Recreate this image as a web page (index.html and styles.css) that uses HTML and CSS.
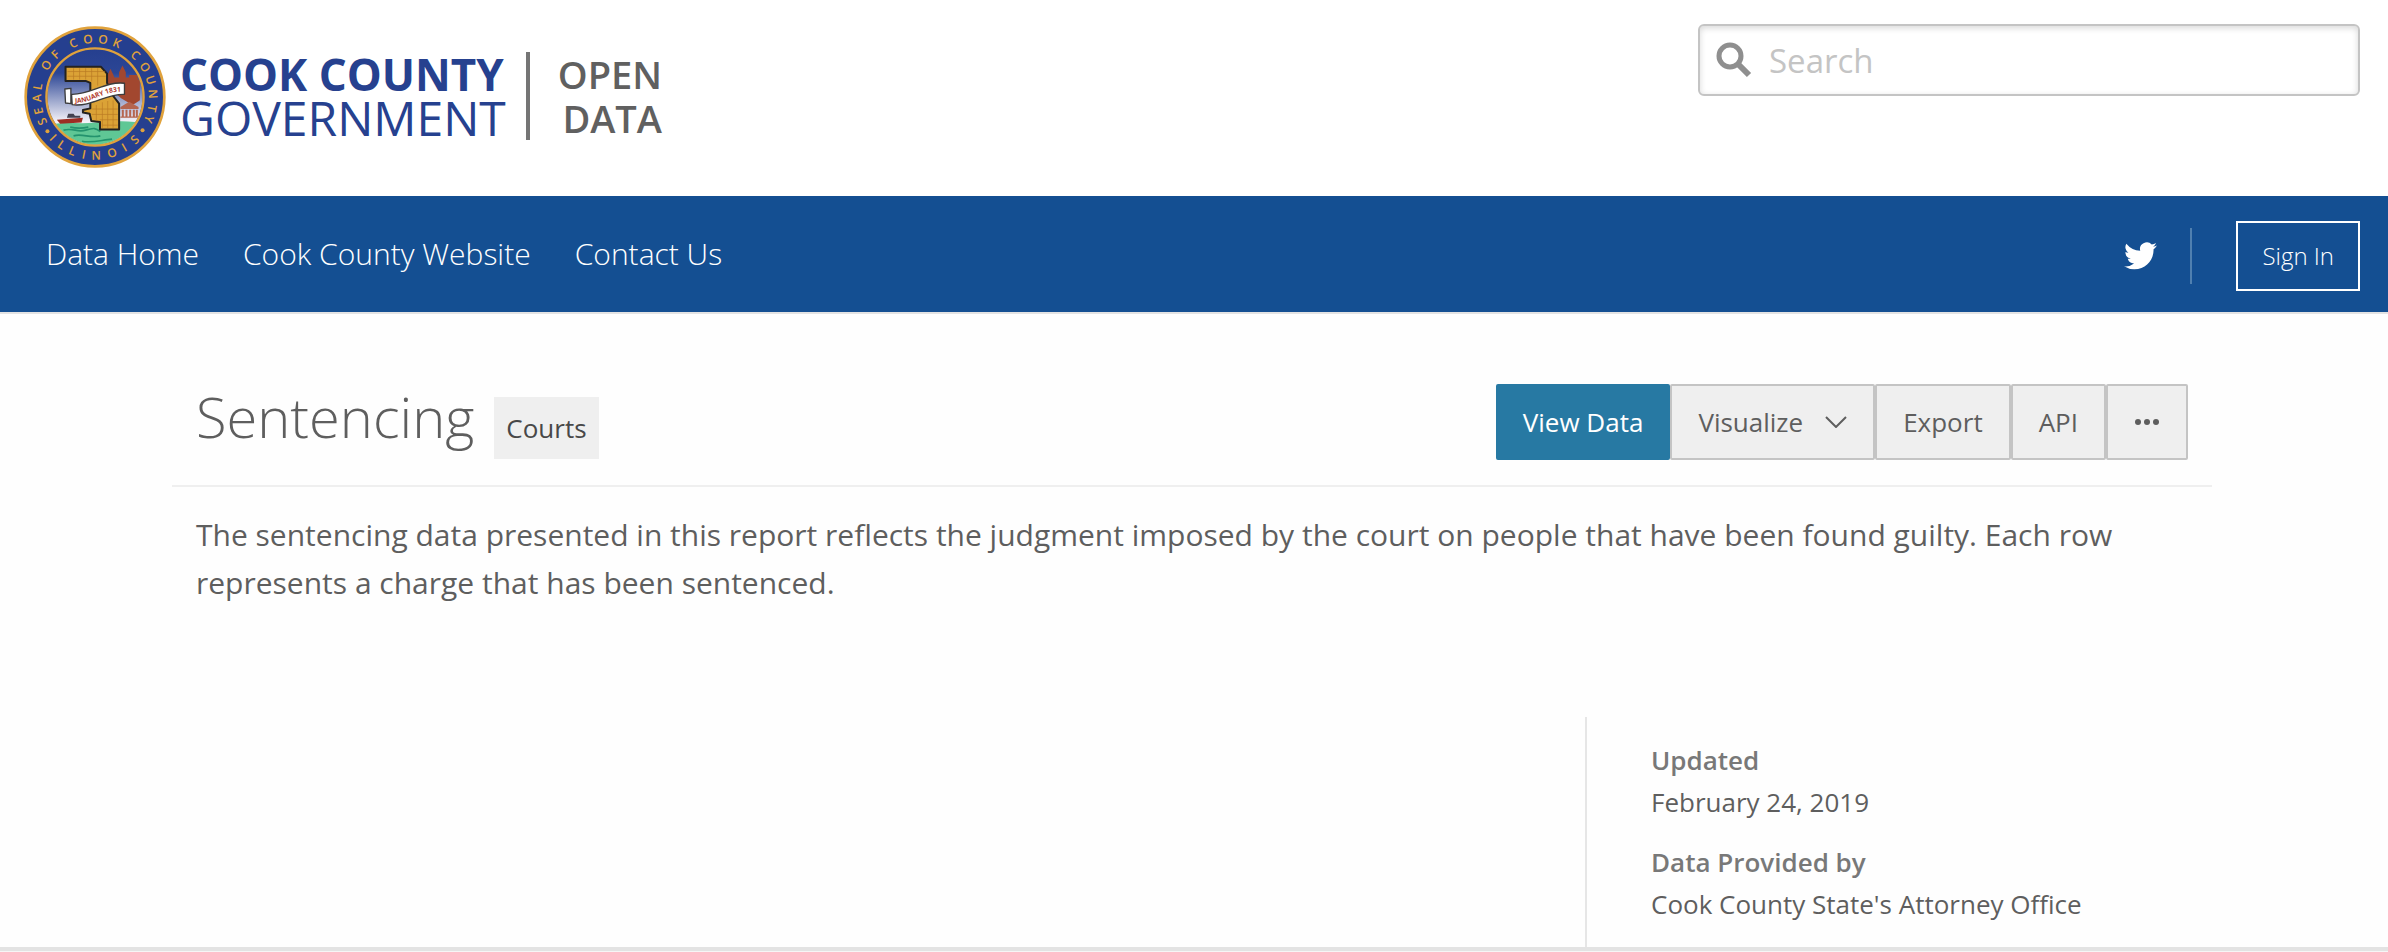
FILE: index.html
```html
<!DOCTYPE html>
<html lang="en">
<head>
<meta charset="utf-8">
<title>Sentencing | Cook County Open Data</title>
<link rel="stylesheet" href="styles.css">
</head>
<body>
<header class="site-header">
  <a class="brand" href="#">
    <svg class="seal" viewBox="42 34 424 424" role="img" aria-label="Seal of Cook County, Illinois">
      <defs>
        <linearGradient id="sky" x1="0" y1="0" x2="0" y2="1">
          <stop offset="0" stop-color="#253f8f"/>
          <stop offset=".25" stop-color="#2c4695"/>
          <stop offset=".75" stop-color="#f4f2f8"/>
          <stop offset="1" stop-color="#ffffff"/>
        </linearGradient>
        <clipPath id="disc"><circle cx="254" cy="246" r="142"/></clipPath>
        <path id="ring-top" d="M254 407A161 161 0 0 1 254 85A161 161 0 0 1 254 407"/>
        <path id="ring-bottom" d="M67 246A187 187 0 0 0 441 246"/>
        <path id="ribbon" d="M194 264C245 264 280 228 332 230"/>
      </defs>
      <circle cx="254" cy="246" r="207" fill="#253f8f" stroke="#e0a23c" stroke-width="8"/>
      <g clip-path="url(#disc)">
        <path fill="url(#sky)" d="M110 102h290v290H110z"/>
        <path fill="#5fc795" d="M110 330C160 318 210 328 254 322S340 318 400 322V400H110z"/>
        <path fill="none" stroke="#23936d" stroke-width="5" d="M160 345c30-8 40 8 66 0s30-6 44 4M190 362c26-8 50 8 80 0M215 378c30 6 60-4 90-6M180 336c20 4 34 4 54 0"/>
        <path fill="#a2472f" d="M292 215V180l8-18 8 16 4 10h14v-16l10-20 10 20v16h10v-8h26v14h6v62c-8 4-16 14-26 12l-30-18z"/>
        <path fill="#b5654f" d="M330 276l26-16 28 16v6h-54zM334 284h6v20h-6zM345 284h6v20h-6zM356 284h6v20h-6zM367 284h6v20h-6zM376 284h6v20h-6zM330 304h52v4h-52z"/>
        <path fill="#9c2d23" d="M140 314l78-6-4 14-64 4z"/>
        <path fill="#43414f" d="M170 308l4-12h16l4 6h16v6z"/>
      </g>
      <path fill="#dba236" stroke="#242220" stroke-width="6" stroke-linejoin="round" d="M166 156H272L290 176V204L306 240L326 266V343H269V321L243 318L238 296L218 292V285L240 280V204L226 198H166Z"/>
      <path fill="none" stroke="#b87a24" stroke-width="2" d="M172 170H284M172 184H286M190 160V194M208 160V194M226 160V194M244 160V200M262 160V212M244 282H322M244 298H322M268 314H322M276 330H322M258 270V316M276 262V338M292 258V338M308 256V338"/>
      <path fill="#fff" stroke="#3c3c3c" stroke-width="4" stroke-linejoin="round" d="M184 238C240 240 285 198 342 205V238C285 236 245 276 186 269ZM164 222L182 220V266L166 264Z"/>
      <text class="ribbon-text"><textPath href="#ribbon">JANUARY 1831</textPath></text>
      <circle cx="254" cy="246" r="145" fill="none" stroke="#e0a23c" stroke-width="7"/>
      <text class="ring-text"><textPath href="#ring-top"><tspan x="183 214 250 282">SEAL</tspan><tspan x="346 385">OF</tspan><tspan x="444 486 528 568">COOK</tspan><tspan x="629 672 711 750 790 821">COUNTY</tspan></textPath></text>
      <text class="ring-text"><textPath href="#ring-bottom"><tspan x="144 180 219 258 297 349 392 434">ILLINOIS</tspan></textPath></text>
      <circle cx="112" cy="348" r="6" fill="#e0a23c"/>
      <circle cx="396" cy="345" r="6" fill="#e0a23c"/>
    </svg>
    <span class="brand-name"><strong>COOK COUNTY</strong><span>GOVERNMENT</span></span>
    <span class="brand-site"><span>OPEN</span><span>DATA</span></span>
  </a>
  <form class="search" role="search">
    <label class="search-label" for="q">
      <svg class="search-icon" viewBox="0 0 36 36" role="img" aria-label="Search"><circle cx="14" cy="14" r="11" fill="none" stroke="#8f8f8f" stroke-width="5"/><path d="M22 22L33 33" stroke="#8f8f8f" stroke-width="6"/></svg>
    </label>
    <input class="search-input" id="q" type="search" placeholder="Search">
  </form>
</header>
<nav class="site-nav">
  <div class="nav-links">
    <a href="#">Data Home</a>
    <a href="#">Cook County Website</a>
    <a href="#">Contact Us</a>
  </div>
  <div class="nav-account">
    <a class="twitter" href="#" aria-label="Twitter"><svg viewBox="0 0 24 20" width="33" height="28"><path fill="#fff" d="M24 2.400a9.800 9.800 0 0 1-2.800.800A4.900 4.900 0 0 0 23.300.500a9.900 9.900 0 0 1-3.100 1.200A4.900 4.900 0 0 0 11.800 6.200 14 14 0 0 1 1.700 1a4.900 4.900 0 0 0 1.500 6.600A4.900 4.900 0 0 1 1 7v.100a4.900 4.900 0 0 0 3.900 4.800 4.900 4.900 0 0 1-2.200.1 4.900 4.900 0 0 0 4.600 3.400A9.900 9.900 0 0 1 0 17.500a14 14 0 0 0 7.500 2.200c9.100 0 14-7.500 14-14v-.600A10 10 0 0 0 24 2.400z"/></svg></a>
    <a class="sign-in" href="#">Sign In</a>
  </div>
</nav>
<main class="dataset">
  <div class="dataset-head">
    <div class="dataset-title">
      <h1>Sentencing</h1>
      <a class="category" href="#">Courts</a>
    </div>
    <div class="actions">
      <button class="action primary" type="button">View Data</button>
      <button class="action" type="button">Visualize <svg class="chevron" viewBox="0 0 22 12" width="22" height="12"><path d="M1 1L11 11L21 1" fill="none" stroke="#5e5e5e" stroke-width="2"/></svg></button>
      <button class="action" type="button">Export</button>
      <button class="action" type="button">API</button>
      <button class="action more" type="button" aria-label="More"><svg class="dots" viewBox="0 0 24 6" width="24" height="6"><g fill="#5e5e5e"><circle cx="3" cy="3" r="3"/><circle cx="12" cy="3" r="3"/><circle cx="21" cy="3" r="3"/></g></svg></button>
    </div>
  </div>
  <p class="description">The sentencing data presented in this report reflects the judgment imposed by the court on people that have been found guilty. Each row represents a charge that has been sentenced.</p>
  <dl class="metadata">
    <dt>Updated</dt>
    <dd>February 24, 2019</dd>
    <dt>Data Provided by</dt>
    <dd>Cook County State's Attorney Office</dd>
  </dl>
</main>
<hr class="section-rule">
</body>
</html>
```
FILE: styles.css
```css
* { box-sizing: border-box; }

body {
  margin: 0;
  background: #fefefe;
  color: #5e5e5e;
  font-family: "Open Sans", "Noto Sans", sans-serif;
  font-size: 26px;
}

a { color: inherit; text-decoration: none; }

.site-header {
  display: flex;
  justify-content: space-between;
  align-items: flex-start;
  height: 196px;
  padding: 24px 28px 0 24px;
  background: #fff;
}

.brand { display: flex; align-items: center; }
.seal { width: 142px; height: 142px; margin-top: 2px; }
.ring-text { fill: #e0a23c; font-size: 36px; font-weight: 600; text-anchor: middle; }
.ribbon-text { fill: #b03a2c; font-size: 20px; font-weight: 700; }

.brand-name, .brand-site { display: flex; flex-direction: column; line-height: 44px; }
.brand-name { margin-left: 14px; color: #26418f; font-size: 48px; }
.brand-name strong { font-size: 44px; font-weight: 700; }
.brand-site {
  align-items: flex-end;
  margin-left: 20px;
  padding: 0 0 0 28px;
  border-left: 4px solid #757575;
  color: #606060;
  font-size: 38px;
  font-weight: 600;
}

.search {
  display: flex;
  align-items: center;
  width: 662px;
  height: 72px;
  padding: 0 16px;
  border: 2px solid #c4c4c4;
  border-radius: 6px;
  background: #fff;
  box-shadow: inset 0 2px 6px #d8d8d8;
}
.search-icon { display: block; width: 36px; height: 36px; }
.search-input {
  flex: 1;
  min-width: 0;
  margin-left: 17px;
  padding: 0;
  border: 0;
  outline: 0;
  background: none;
  color: #5e5e5e;
  font: 33px "Open Sans", sans-serif;
}
.search-input::placeholder { color: #c4c4c4; }

.site-nav {
  display: flex;
  justify-content: space-between;
  align-items: center;
  height: 118px;
  padding: 0 28px 0 46px;
  border-bottom: 2px solid #e3e3e3;
  background: #144f92;
  color: #fff;
  font-weight: 300;
}
.nav-links { display: flex; gap: 44px; padding-bottom: 2px; font-size: 30px; }
.nav-account { display: flex; align-items: center; padding-top: 4px; }
.twitter { padding: 14px 33px 14px 0; border-right: 2px solid #5080b0; line-height: 0; }
.sign-in {
  margin-left: 44px;
  padding: 0 24px;
  border: 2px solid #fff;
  font-size: 24px;
  line-height: 66px;
}

.dataset { padding: 70px 176px 0 172px; }
.dataset-head {
  display: flex;
  justify-content: space-between;
  align-items: flex-start;
  height: 103px;
  padding: 0 24px;
  border-bottom: 2px solid #efefef;
}
.dataset-title { display: flex; align-items: baseline; gap: 20px; }
h1 { margin: 0; font-size: 56px; font-weight: 300; line-height: 64px; }
.category { padding: 0 12px; background: #efefef; color: #484848; line-height: 62px; }

.actions { display: flex; }
.action {
  display: flex;
  align-items: center;
  height: 76px;
  padding: 0 26px;
  border: 2px solid #c4c4c4;
  border-radius: 2px;
  background: #efefef;
  color: #5e5e5e;
  font: 26px "Open Sans", sans-serif;
}
.action.primary { padding: 0 25px; border-color: #2779a3; background: #2779a3; color: #fff; }
.action.more { padding: 0 27px; }
.chevron { margin-left: 22px; }

.description { margin: 24px 24px 0; font-size: 30px; line-height: 48px; }

.metadata {
  width: 603px;
  margin: 110px 24px 0 auto;
  padding: 22px 0 22px 64px;
  border-left: 2px solid #e6e6e6;
  line-height: 42px;
}
.metadata dt { color: #787878; font-weight: 600; }
.metadata dd { margin: 0; }
.metadata dd + dt { margin-top: 18px; }

.section-rule { height: 5px; margin: 0; border: 0; border-bottom: 1px solid #f6f6f6; background: #e3e3e3; }
```
